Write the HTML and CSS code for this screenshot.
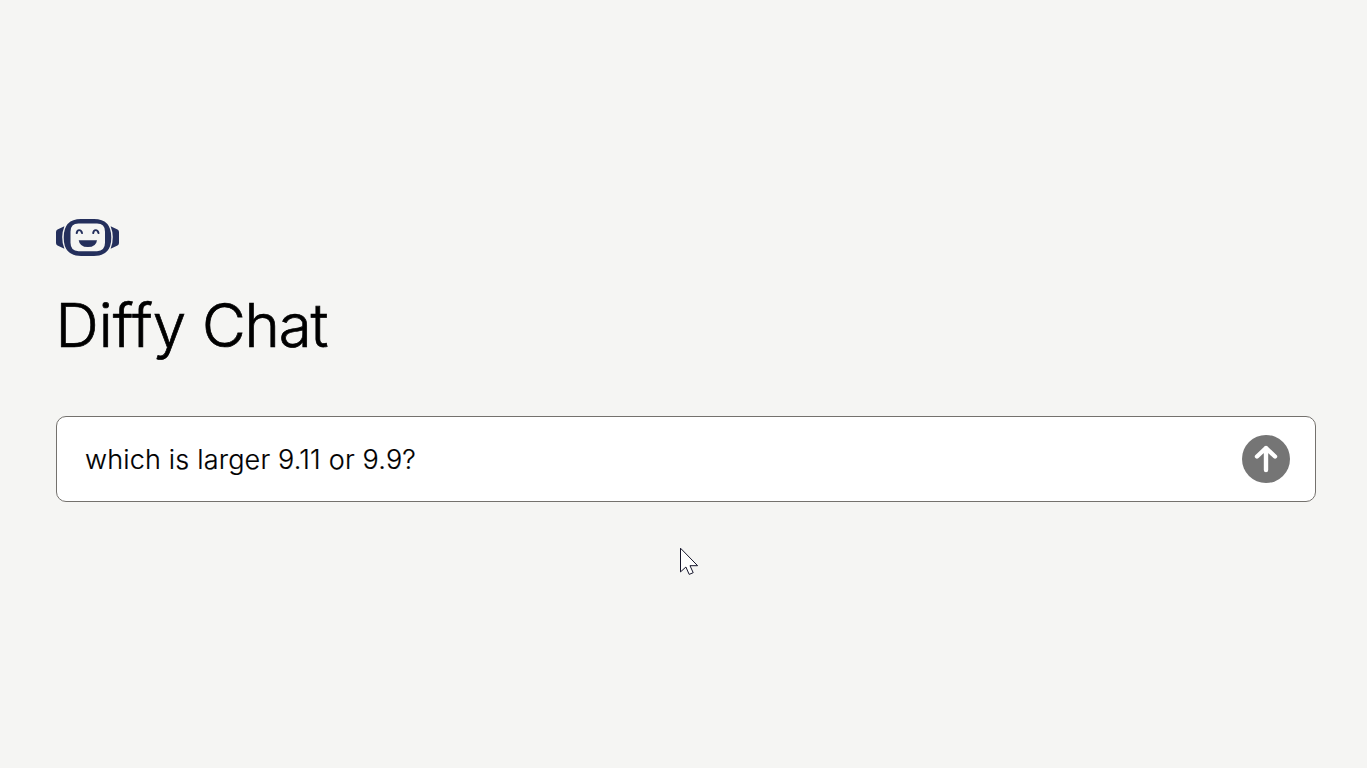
FILE: index.html
```html
<!DOCTYPE html>
<html lang="en">
<head>
<meta charset="utf-8">
<title>Diffy Chat</title>
<link rel="stylesheet" href="styles.css">
</head>
<body>
<main class="chat">
  <svg class="logo" viewBox="0 0 63 38" preserveAspectRatio="none" aria-hidden="true">
    <path fill="#242f5c" d="M8.4 7.5Q3.9 19 8.4 30.5L1.5 27.2Q0 26.4 0 24.7V13.3Q0 11.6 1.5 10.8ZM54.6 7.5Q59.1 19 54.6 30.5L61.5 27.2Q63 26.4 63 24.7V13.3Q63 11.6 61.5 10.8Z"/>
    <path fill="#242f5c" fill-rule="evenodd" d="M25 0H38Q55.3 0 55.3 19T38 38H25Q7.7 38 7.7 19T25 0ZM22.5 4.7Q14.5 4.7 14.5 13V24.5Q14.5 33 22.5 33H41Q49 33 49 24.5V13Q49 4.7 41 4.7Z"/>
    <path fill="#242f5c" d="M22.7 21.7H41Q40.2 28.7 31.9 28.7T22.7 21.7Z"/>
    <path fill="none" stroke="#242f5c" stroke-width="2" stroke-linecap="round" d="M20.7 14.5C21.2 10.4 25.1 10.4 26 14.5M37.2 14.5C37.7 10.4 41.6 10.4 42.5 14.5"/>
  </svg>
  <h1 class="title"><span class="wide">Diffy</span> Chat</h1>
  <form class="composer">
    <span class="message">which is larger 9.11 or 9.9?</span>
    <button class="send" type="button" aria-label="Send">
      <svg class="arrow" viewBox="0 0 48 48"><path d="M24 35V13M15 21.5L24 13L33 21.5"/></svg>
    </button>
  </form>
</main>
<svg class="pointer" viewBox="0 0 20 29" aria-hidden="true">
  <path d="M1.5 1.2V24.9L6.9 20L10.2 27.4L14.2 25.7L11 18.7H18.6Z"/>
</svg>
</body>
</html>
```
FILE: styles.css
```css
body {
  margin: 0;
  height: 768px;
  overflow: hidden;
  background: #f5f5f3;
  color: #000;
  font-family: Inter, Roboto, sans-serif;
  font-weight: 300;
}
.chat {
  padding: 219px 51px 0 56px;
}
.logo {
  display: block;
  width: 63px;
  height: 37px;
}
.title {
  margin: 33px 0 0 -0.5px;
  height: 127px;
  font-size: 60px;
  line-height: 73px;
  font-weight: 300;
  letter-spacing: -1.1px;
  -webkit-text-stroke: 0.7px #000;
}
.wide {
  letter-spacing: 0.1px;
}
.composer {
  display: flex;
  align-items: center;
  justify-content: space-between;
  box-sizing: border-box;
  height: 86px;
  padding: 0 25px 0 28px;
  border: 1px solid #74716d;
  border-radius: 10px;
  background: #fff;
}
.message {
  padding-top: 2px;
  font-size: 27px;
  line-height: 34px;
  letter-spacing: 0.18px;
  -webkit-text-stroke: 0.2px #000;
}
.send {
  width: 48px;
  height: 48px;
  padding: 0;
  border: 0;
  border-radius: 50%;
  background: #757575;
}
.arrow {
  display: block;
  fill: none;
  stroke: #fff;
  stroke-width: 4.4;
  stroke-linecap: round;
  stroke-linejoin: round;
}
.pointer {
  position: absolute;
  left: 679px;
  top: 547px;
  width: 20px;
  height: 29px;
  fill: #fff;
  stroke: #15152a;
  stroke-width: 1;
}
```
